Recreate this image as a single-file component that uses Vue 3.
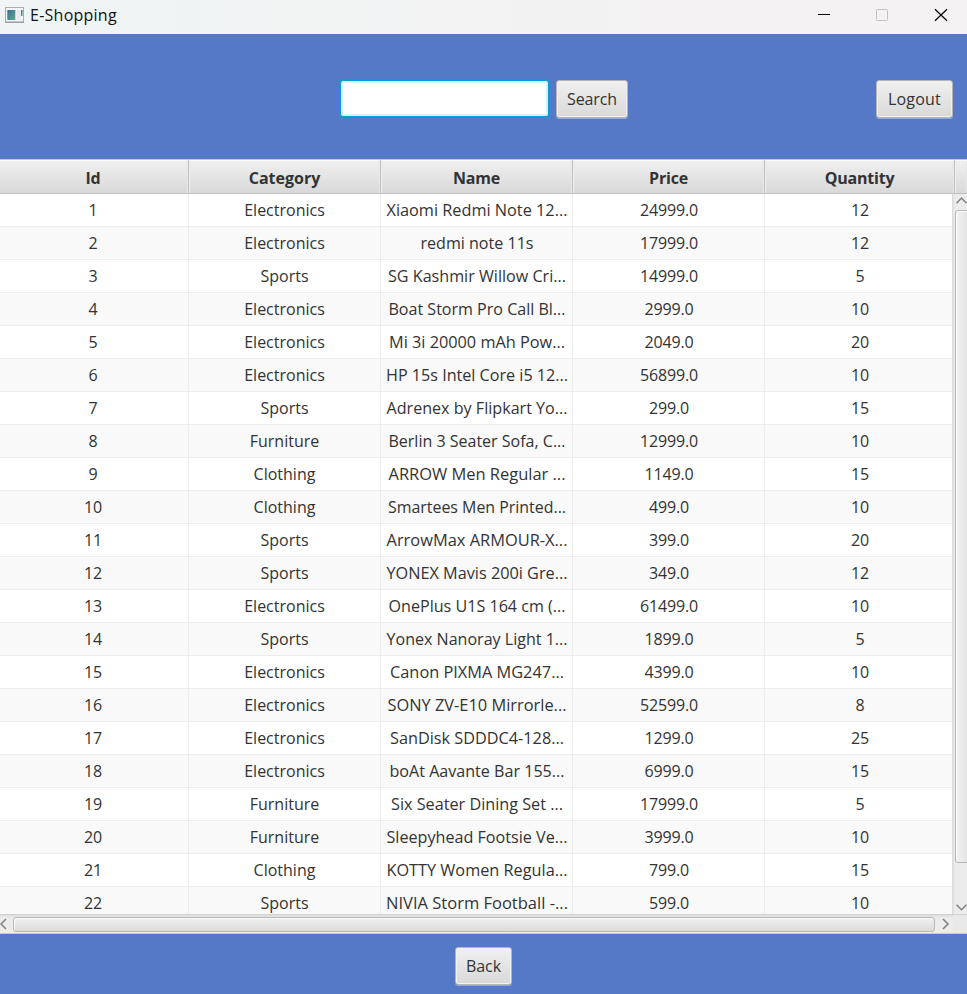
<script setup>
const columns = ['Id', 'Category', 'Name', 'Price', 'Quantity']
const rows = [
  ['Electronics', 'Xiaomi Redmi Note 12...', '24999.0', 12],
  ['Electronics', 'redmi note 11s', '17999.0', 12],
  ['Sports', 'SG Kashmir Willow Cri...', '14999.0', 5],
  ['Electronics', 'Boat Storm Pro Call Bl...', '2999.0', 10],
  ['Electronics', 'Mi 3i 20000 mAh Pow...', '2049.0', 20],
  ['Electronics', 'HP 15s Intel Core i5 12...', '56899.0', 10],
  ['Sports', 'Adrenex by Flipkart Yo...', '299.0', 15],
  ['Furniture', 'Berlin 3 Seater Sofa, C...', '12999.0', 10],
  ['Clothing', 'ARROW Men Regular ...', '1149.0', 15],
  ['Clothing', 'Smartees Men Printed...', '499.0', 10],
  ['Sports', 'ArrowMax ARMOUR-X...', '399.0', 20],
  ['Sports', 'YONEX Mavis 200i Gre...', '349.0', 12],
  ['Electronics', 'OnePlus U1S 164 cm (...', '61499.0', 10],
  ['Sports', 'Yonex Nanoray Light 1...', '1899.0', 5],
  ['Electronics', 'Canon PIXMA MG247...', '4399.0', 10],
  ['Electronics', 'SONY ZV-E10 Mirrorle...', '52599.0', 8],
  ['Electronics', 'SanDisk SDDDC4-128...', '1299.0', 25],
  ['Electronics', 'boAt Aavante Bar 155...', '6999.0', 15],
  ['Furniture', 'Six Seater Dining Set ...', '17999.0', 5],
  ['Furniture', 'Sleepyhead Footsie Ve...', '3999.0', 10],
  ['Clothing', 'KOTTY Women Regula...', '799.0', 15],
  ['Sports', 'NIVIA Storm Football -...', '599.0', 10],
].map((r, i) => [i + 1, ...r])

// Rendered text widths of the name column, in pixels
const nameWidths = [181, 113, 178, 177, 176, 182, 181, 177, 177, 178, 181, 181, 177, 181, 174, 179, 174, 175, 172, 181, 181, 182]
</script>

<template>
  <div class="window">
    <header class="titlebar">
      <svg class="app-icon" width="20" height="16" viewBox="0 0 20 16">
        <defs>
          <linearGradient id="screen" x1="0" y1="0" x2="1" y2="1">
            <stop offset="0" stop-color="#3a6ea0" />
            <stop offset="1" stop-color="#58a982" />
          </linearGradient>
        </defs>
        <rect x="0.5" y="0.5" width="18" height="14.5" fill="#f4f5f6" stroke="#a9acb2" />
        <path d="M0 15.3H19" stroke="#92959b" />
        <rect x="2.3" y="3" width="8" height="10" fill="url(#screen)" />
        <rect x="11.5" y="3" width="4" height="10" fill="#e8eaec" />
        <rect x="16" y="3" width="1.6" height="6" fill="url(#screen)" />
      </svg>
      <span class="title">E-Shopping</span>
      <svg class="controls" width="132" height="34" viewBox="0 0 132 34">
        <path d="M0 14.5H12" stroke="#000" />
        <rect x="58.5" y="9.5" width="11" height="11" rx="1" fill="none" stroke="#c3c1c2" />
        <path d="M117 9.2L129 20.8M129 9.2L117 20.8" stroke="#000" stroke-width="1.2" />
      </svg>
    </header>

    <section class="toolbar">
      <input class="search" type="text" />
      <button class="btn btn-search">Search</button>
      <button class="btn btn-logout">Logout</button>
    </section>

    <main class="table">
      <div class="grid head">
        <div v-for="c in columns" :key="c" class="th">{{ c }}</div>
        <div class="th filler"></div>
      </div>
      <div class="middle">
        <div class="body">
          <div v-for="(r, i) in rows" :key="i" class="grid row">
            <div v-for="(v, j) in r" :key="j" class="td">
              <svg v-if="j === 2" class="name" width="190" height="32">
                <text x="95" y="22" text-anchor="middle" :textLength="nameWidths[i]" lengthAdjust="spacingAndGlyphs">{{ v }}</text>
              </svg>
              <span v-else>{{ v }}</span>
            </div>
          </div>
        </div>
        <div class="vbar">
          <svg width="15" height="16"><path d="M4.5 9.3L9.5 4L14.5 9.3" /></svg>
          <div class="vthumb"></div>
          <svg class="down" width="15" height="16"><path d="M4.5 6.7L9.5 11.7L14.5 6.7" /></svg>
        </div>
      </div>
      <div class="hbar">
        <svg width="13" height="18"><path d="M6 4L1 9L6 14" /></svg>
        <div class="hthumb"></div>
        <svg width="18" height="18"><path d="M8 4L13 9L8 14" /></svg>
        <div class="corner"></div>
      </div>
    </main>

    <footer class="footer">
      <button class="btn btn-back">Back</button>
    </footer>
  </div>
</template>

<style>
body { margin: 0; overflow: hidden; }
</style>

<style scoped>
.window {
  width: 967px;
  height: 994px;
  display: flex;
  flex-direction: column;
  overflow: hidden;
  background: #5579c7;
  color: #333;
  font: 16px/22px "Open Sans", "Noto Sans", sans-serif;
}
.titlebar {
  height: 34px;
  flex: none;
  display: flex;
  align-items: flex-start;
  background: linear-gradient(90deg, #eff4f4, #f4f2f3 70%);
}
.app-icon { margin: 7px 0 0 5px; }
.title {
  margin: 4px 0 0 5px;
  color: #111;
  letter-spacing: 0.25px;
}
.controls { margin-left: auto; margin-right: 17px; }
.toolbar {
  height: 125px;
  flex: none;
  display: flex;
  align-items: flex-start;
  box-sizing: border-box;
  padding: 46px 14px 0 340px;
}
.search {
  width: 209px;
  height: 37px;
  box-sizing: border-box;
  border: 1px solid #039ed3;
  border-radius: 3px;
  box-shadow: inset 0 0 0 2px #d9f0f8, 0 0 0 0.5px #039ed3;
  background: #fff;
  outline: none;
}
.btn {
  height: 38px;
  padding: 0;
  box-sizing: border-box;
  border: 1px solid #b5b5b5;
  border-radius: 3px;
  background: linear-gradient(#f0f0f0, #d9d9d9);
  box-shadow: inset 0 0 0 1px #f0f0f0, 0 1px 0 #91a8da;
  color: #333;
  font: inherit;
}
.btn-search { width: 72px; margin-left: 7px; letter-spacing: -0.1px; }
.btn-logout { width: 77px; margin-left: auto; letter-spacing: 0.2px; }
.table { height: 775px; flex: none; }
.grid {
  display: grid;
  grid-template-columns: 189px 192px 192px 192px 190px 12px;
}
.head {
  height: 35px;
  box-sizing: border-box;
  border-top: 1px solid #c8c8c8;
  border-bottom: 1px solid #c0c0c0;
  background: linear-gradient(#f0f0f0, #d9d9d9);
  font-weight: 700;
}
.th {
  display: flex;
  align-items: center;
  justify-content: center;
  padding-top: 2px;
  border-right: 1px solid #c2c2c2;
  box-shadow: inset 0 1px 0 #fafafa, inset -1px 0 0 #e6e6e6, inset 1px 0 0 #eee;
  letter-spacing: -0.2px;
}
.th:first-child { box-shadow: inset 0 1px 0 #fafafa, inset -1px 0 0 #e6e6e6; }
.th:nth-child(2) { letter-spacing: 0; }
.th:first-child, .td:first-child { padding-right: 2px; }
.th.filler { border-right: 0; }
.middle { display: flex; height: 720px; }
.body { width: 952px; overflow: hidden; }
.row {
  height: 33px;
  box-sizing: border-box;
  border-bottom: 1px solid #ededed;
  background: #fff;
}
.row:nth-child(even) { background: #f9f9f9; }
.td {
  display: flex;
  align-items: center;
  justify-content: center;
  border-right: 1px solid #ededed;
  letter-spacing: -0.15px;
}
.td:nth-child(2) { letter-spacing: 0; }
.td:nth-child(4), .td:nth-child(5) { padding-left: 1px; }
.name { display: block; fill: #333; letter-spacing: 0; }
.vbar {
  width: 15px;
  box-sizing: border-box;
  display: flex;
  flex-direction: column;
  overflow: hidden;
  background: linear-gradient(90deg, #d9d9d9, #ececec 3px);
}
.vbar svg { flex: none; }
.vbar path, .hbar path { fill: none; stroke: #818181; stroke-width: 1.5; }
.vthumb {
  width: 18px;
  height: 653px;
  margin-left: 3px;
  box-sizing: border-box;
  border: 1px solid #b8b8b8;
  border-radius: 3px;
  background: linear-gradient(90deg, #f2f2f2, #dedede);
  box-shadow: inset 1px 1px 0 #fafafa;
}
.down { margin-top: auto; }
.hbar {
  height: 20px;
  display: flex;
  align-items: center;
  box-sizing: border-box;
  border-top: 1px solid #d2d2d2;
  border-bottom: 1px solid #c8c8c8;
  background: linear-gradient(#dcdcdc, #ececec 3px);
}
.hthumb {
  width: 922px;
  height: 15px;
  box-sizing: border-box;
  border: 1px solid #b8b8b8;
  border-radius: 3px;
  background: linear-gradient(#f0f0f0, #dadada);
  box-shadow: inset 1px 1px 0 #fafafa;
}
.corner { width: 14px; height: 18px; background: #e9e9e9; }
.footer { height: 60px; display: flex; align-items: flex-start; padding: 13px 0 0 455px; box-sizing: border-box; }
.btn-back { width: 57px; letter-spacing: -0.1px; }
</style>
